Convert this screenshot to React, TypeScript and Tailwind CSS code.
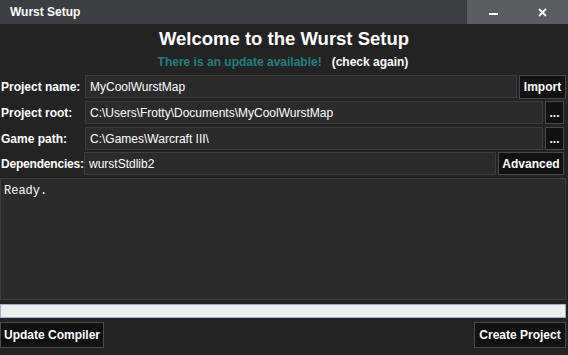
import React from "react";

const font = { fontFamily: '"Liberation Sans", Arial, sans-serif' };

const Field = ({ value, className }: { value: string; className: string }) => (
    <div className={`flex h-[23px] items-center border border-[#3e3e3e] bg-[#2b2b2b] px-[4px] text-[12px] text-white ${className}`}>
        {value}
    </div>
);

const Btn = ({ label, className }: { label: string; className: string }) => (
    <div className={`flex items-center justify-center border border-[#4a4a4a] bg-[#111111] text-[12px] font-bold text-white ${className}`}>
        {label}
    </div>
);

export default function App() {
    return (
        <div style={font} className="flex h-[355px] w-[568px] flex-col overflow-hidden bg-[#232323] text-white">
            <div className="flex h-[24px] shrink-0 items-center bg-[#3c3f41]">
                <span className="grow pl-[10px] text-[12px] font-bold">Wurst Setup</span>
                <div className="flex h-full w-[101px] items-center bg-[#5b5e61]">
                    <div className="flex w-[52px] justify-center pt-[3px]">
                        <div className="h-[2px] w-[9px] bg-white" />
                    </div>
                    <div className="flex w-[46px] justify-center">
                        <svg width="9" height="9" viewBox="0 0 9 9">
                            <path d="M1 1L8 8M8 1L1 8" stroke="white" strokeWidth="1.8" />
                        </svg>
                    </div>
                </div>
            </div>

            <div className="pt-[4px] text-center text-[18.5px] font-bold leading-[22px]">Welcome to the Wurst Setup</div>
            <div className="mt-[3px] flex h-[18px] items-center justify-center gap-[10px] pr-[2px] text-[12px] font-bold">
                <span className="text-[#208080]">There is an update available!</span>
                <span>(check again)</span>
            </div>

            <div className="mt-[4px] flex h-[23px] items-center">
                <span className="w-[85px] pl-[1px] text-[12px] font-bold">Project name:</span>
                <Field value="MyCoolWurstMap" className="w-[432px]" />
                <Btn label="Import" className="ml-[2px] h-[24px] w-[47px]" />
            </div>
            <div className="mt-[3px] flex h-[23px] items-center">
                <span className="w-[85px] pl-[1px] text-[12px] font-bold">Project root:</span>
                <Field value="C:\Users\Frotty\Documents\MyCoolWurstMap" className="w-[458px]" />
                <Btn label="..." className="ml-[2px] h-[23px] w-[19px]" />
            </div>
            <div className="mt-[3px] flex h-[23px] items-center">
                <span className="w-[85px] pl-[1px] text-[12px] font-bold">Game path:</span>
                <Field value="C:\Games\Warcraft III\" className="w-[458px]" />
                <Btn label="..." className="ml-[2px] h-[23px] w-[19px]" />
            </div>
            <div className="mt-[2px] flex h-[23px] items-center">
                <span className="w-[84px] pl-[1px] text-[12px] font-bold tracking-[-0.2px]">Dependencies:</span>
                <Field value="wurstStdlib2" className="w-[412px]" />
                <Btn label="Advanced" className="ml-[2px] h-[23px] w-[66px]" />
            </div>

            <div
                style={{ fontFamily: '"Liberation Mono", "DejaVu Sans Mono", monospace' }}
                className="mt-[3px] h-[122px] w-[566px] shrink-0 border border-[#3e3e3e] bg-[#2b2b2b] px-[3px] pt-[5px] text-[12px] leading-[14px] text-white">
                Ready.
            </div>

            <div className="mt-[4px] h-[14px] w-[566px] shrink-0 border border-[#9fb1c6] bg-[#eeeeee]" />

            <div className="mt-[4px] flex w-[566px] justify-between">
                <Btn label="Update Compiler" className="h-[26px] w-[104px]" />
                <Btn label="Create Project" className="h-[26px] w-[92px]" />
            </div>
        </div>
    );
}
